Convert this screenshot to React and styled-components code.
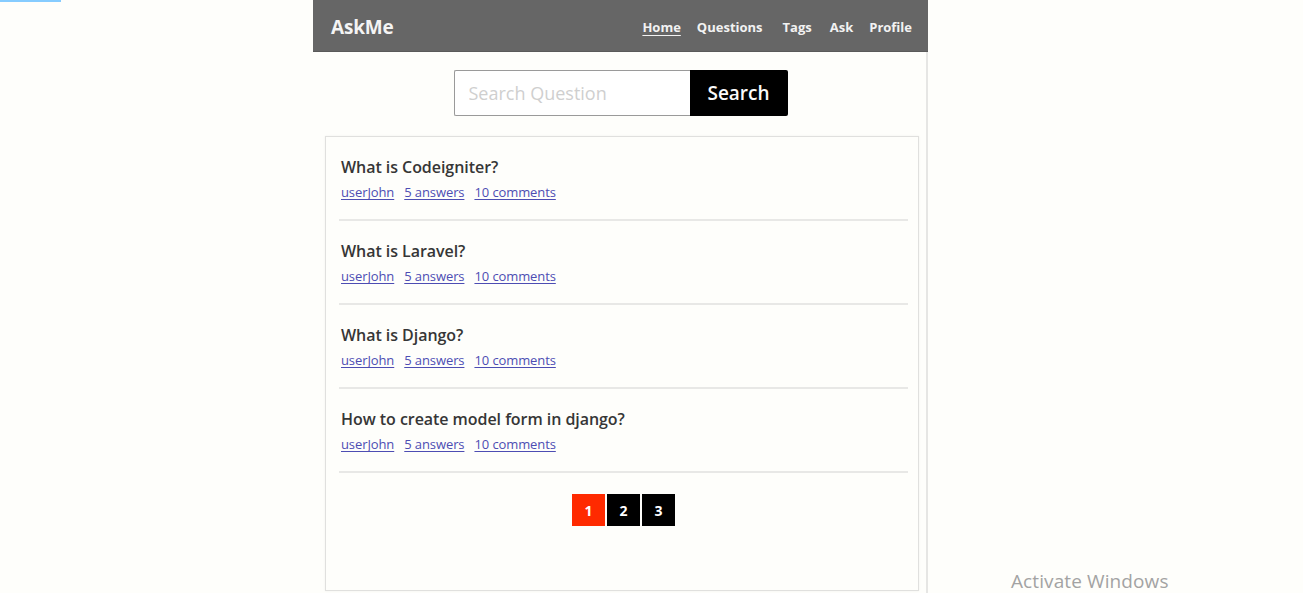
import React from "react";
import styled, { createGlobalStyle } from "styled-components";

const GlobalStyle = createGlobalStyle`
  html, body {
    margin: 0;
    padding: 0;
    background: #fefefb;
    font-family: "Open Sans", "Noto Sans", sans-serif;
  }
  * { box-sizing: border-box; }
`;

const Page = styled.div`
  position: relative;
  display: flex;
  min-height: 593px;
  background: #fefefb;
`;

const LeftGutter = styled.div`
  width: 313px;
  flex-shrink: 0;
`;

const BlueBar = styled.div`
  width: 61px;
  height: 2px;
  background: #86ccff;
`;

const Main = styled.div`
  width: 615px;
  flex-shrink: 0;
  display: flex;
  flex-direction: column;
`;

const Body = styled.div`
  flex: 1;
  border-right: 2px solid #e6e6e4;
  display: flex;
  flex-direction: column;
`;

const Header = styled.header`
  height: 52px;
  background: #666666;
  display: flex;
  align-items: center;
  justify-content: space-between;
  padding: 0 16px 0 18px;
  box-shadow: inset 0 -1px 0 #5a5a5a;
`;

const Logo = styled.div`
  color: #f4f4f4;
  font-size: 19px;
  font-weight: 700;
  letter-spacing: -0.2px;
  margin-top: 1px;
`;

const Nav = styled.nav`
  display: flex;
  gap: 16px;
  margin-top: 2px;
`;

const NavLink = styled.a`
  color: #f2f2f2;
  font-size: 13px;
  font-weight: 700;
  margin-left: ${(p) => p.$extra || 0}px;
  text-decoration: ${(p) => (p.$active ? "underline" : "none")};
  text-underline-offset: 3px;
  cursor: pointer;
`;

const SearchRow = styled.form`
  display: flex;
  justify-content: center;
  margin: 18px 0 0;
  padding-left: 2px;
`;

const SearchInput = styled.input`
  width: 236px;
  height: 46px;
  border: 1px solid #9a9a9a;
  border-right: none;
  border-radius: 2px 0 0 2px;
  padding: 0 14px;
  font-family: "Open Sans", sans-serif;
  font-size: 18px;
  background: #fff;
  outline: none;
  &::placeholder {
    color: #cfcfcf;
  }
`;

const SearchButton = styled.button`
  width: 98px;
  height: 46px;
  border: none;
  background: #000;
  color: #fafafa;
  font-family: "Open Sans", sans-serif;
  font-size: 19px;
  font-weight: 600;
  border-radius: 0 2px 2px 0;
`;

const Card = styled.div`
  margin: 20px 0 0 12px;
  width: 594px;
  height: 455px;
  border: 1px solid #e0e0de;
  box-shadow: 0 0 2px rgba(0, 0, 0, 0.06);
  padding: 0 10px 0 13px;
  display: flex;
  flex-direction: column;
`;

const Item = styled.div`
  padding: 20px 0 18px 2px;
  border-bottom: 2px solid #e8e8e6;
`;

const Title = styled.div`
  font-size: 16px;
  font-weight: 600;
  color: #363636;
  line-height: 20px;
  letter-spacing: -0.05px;
`;

const Meta = styled.div`
  display: flex;
  gap: 10px;
  margin-top: 6px;
  line-height: 18px;
`;

const MetaLink = styled.a`
  font-size: 13px;
  color: #4d4db3;
  text-decoration: underline;
  text-underline-offset: 2px;
  letter-spacing: -0.1px;
  cursor: pointer;
`;

const Pagination = styled.div`
  display: flex;
  justify-content: center;
  gap: 2px;
  margin-top: 21px;
`;

const PageBtn = styled.div`
  width: 33px;
  height: 32px;
  display: flex;
  align-items: center;
  justify-content: center;
  background: ${(p) => (p.$active ? "#ff2a00" : "#000")};
  color: #fff;
  font-size: 14px;
  font-weight: 700;
`;

const Watermark = styled.div`
  position: absolute;
  left: 1011px;
  top: 568px;
  font-family: "Open Sans", "Noto Sans", sans-serif;
  font-size: 19px;
  color: #a3a3a3;
  letter-spacing: 0.1px;
`;

const questions = [
  "What is Codeigniter?",
  "What is Laravel?",
  "What is Django?",
  "How to create model form in django?",
];

export default function App() {
  return (
    <>
      <GlobalStyle />
      <Page>
        <LeftGutter>
          <BlueBar />
        </LeftGutter>
        <Main>
          <Header>
            <Logo>AskMe</Logo>
            <Nav>
              <NavLink $active>Home</NavLink>
              <NavLink>Questions</NavLink>
              <NavLink $extra={4}>Tags</NavLink>
              <NavLink $extra={2}>Ask</NavLink>
              <NavLink>Profile</NavLink>
            </Nav>
          </Header>
          <Body>
            <SearchRow onSubmit={(e) => e.preventDefault()}>
              <SearchInput placeholder="Search Question" />
              <SearchButton type="submit">Search</SearchButton>
            </SearchRow>
            <Card>
              {questions.map((q) => (
                <Item key={q}>
                  <Title>{q}</Title>
                  <Meta>
                    <MetaLink>userJohn</MetaLink>
                    <MetaLink>5 answers</MetaLink>
                    <MetaLink>10 comments</MetaLink>
                  </Meta>
                </Item>
              ))}
              <Pagination>
                <PageBtn $active>1</PageBtn>
                <PageBtn>2</PageBtn>
                <PageBtn>3</PageBtn>
              </Pagination>
            </Card>
          </Body>
        </Main>
        <Watermark>Activate Windows</Watermark>
      </Page>
    </>
  );
}
